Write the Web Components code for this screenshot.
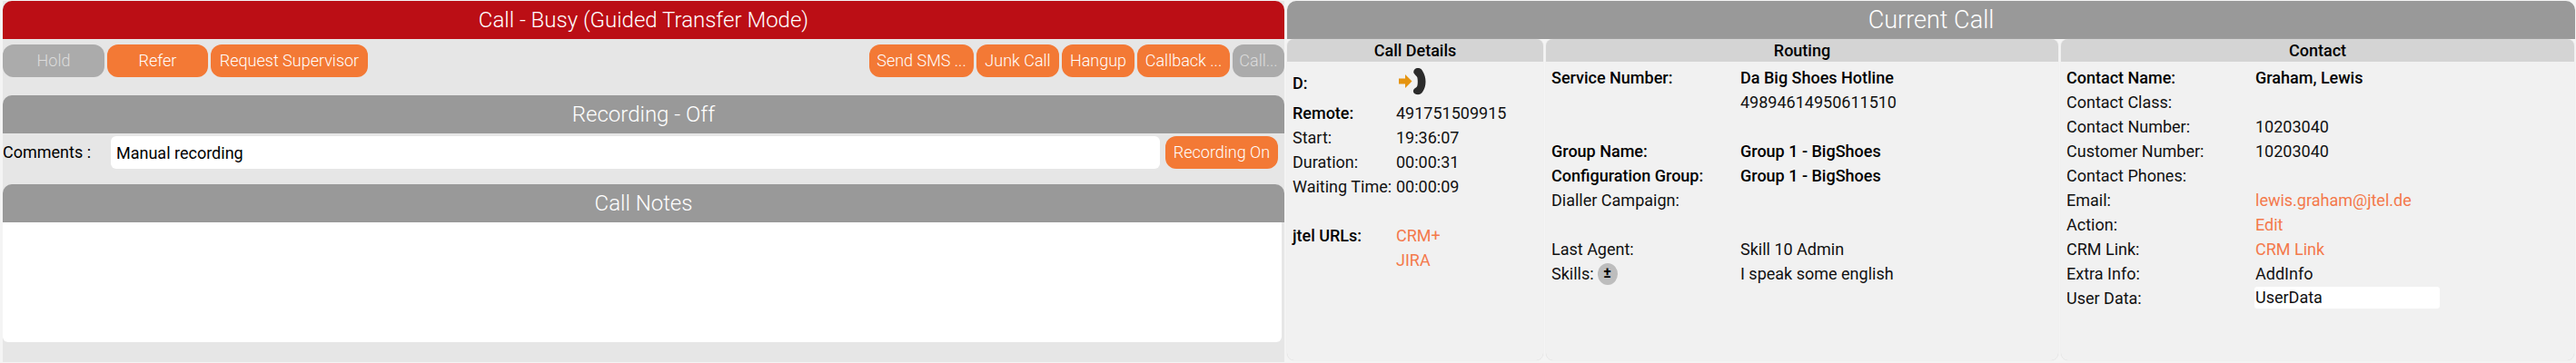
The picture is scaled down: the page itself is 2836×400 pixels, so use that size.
<!DOCTYPE html>
<html>
<head>
<meta charset="utf-8">
<title>Call</title>
<style>
  html, body { margin: 0; height: 100%; }
  body { background: #f4f4f4; font-family: Roboto, "Liberation Sans", sans-serif; font-size: 18px; overflow: hidden; }
  #page { display: grid; grid-template-columns: 1411px 1418px; column-gap: 3px; padding: 1px 1px 0 3px; height: 399px; box-sizing: border-box; }
</style>
</head>
<body>
<template id="tplHeader">
  <style>
    :host { display: block; height: 42px; line-height: 42px; background: #999999; color: #fff; text-align: center; font-size: 24px; font-weight: 300; border-radius: 10px 10px 0 0; }
    :host([kind="busy"]) { background: #bb0e15; }
    :host([kind="large"]) { font-size: 27px; }
  </style>
  <slot></slot>
</template>

<template id="tplButton">
  <style>
    :host { display: block; box-sizing: border-box; height: 36px; line-height: 36px; text-align: center; background: #f37935; color: #fff; font-size: 18px; font-weight: 300; border-radius: 12px; white-space: nowrap; overflow: hidden; }
    :host([disabled]) { background: #ababab; color: #dcdcdc; }
  </style>
  <slot></slot>
</template>

<template id="tplColumn">
  <style>
    :host { display: flex; flex-direction: column; min-width: 0; background: #f1f1f1; border-radius: 8px; box-shadow: 0 0 1px #c8c8c8; overflow: hidden; }
    .title { height: 25px; line-height: 25px; text-align: center; background: #d4d4d4; color: #000; font-size: 18px; font-weight: 500; flex: none; }
    .body { padding: 4px 0 0 6px; flex: 1; }
  </style>
  <div class="title"></div>
  <div class="body"><slot></slot></div>
</template>

<template id="tplRow">
  <style>
    :host { display: grid; grid-template-columns: var(--label-w, 114px) 1fr; height: 27px; line-height: 27px; color: #111; font-size: 18px; font-weight: 400; white-space: nowrap; }
    :host([strong]) { font-weight: 500; color: #000; }
    :host([tall]) { height: 39px; line-height: 39px; }
    .label { display: flex; align-items: center; gap: 4px; }
    ::slotted(a) { color: #f4794b; text-decoration: none; font-weight: 400; }
    ::slotted(.plain) { font-weight: 400; color: #111; }
    ::slotted(.boxed) { display: block; box-sizing: border-box; width: 204px; height: 24px; line-height: 24px; margin: 1px 0 0 -1px; padding-left: 1px; background: #fff; border-radius: 3px; }
  </style>
  <div class="label"><slot name="label"></slot></div>
  <div class="value"><slot></slot></div>
</template>

<template id="tplCommentBar">
  <style>
    :host { display: flex; align-items: center; height: 36px; margin-top: 3px; }
    .label { width: 119px; flex: none; font-size: 18px; font-weight: 400; color: #000; margin-top: -2px; }
    .input { flex: 1; height: 36px; line-height: 37px; padding-left: 6px; background: #fff; border-radius: 6px; font-size: 18px; font-weight: 400; color: #000; }
    .action { width: 124px; margin: 0 7px 0 6px; flex: none; }
  </style>
  <div class="label">Comments :</div>
  <div class="input"><slot></slot></div>
  <div class="action"><slot name="action"></slot></div>
</template>

<template id="tplCallPanel">
  <style>
    :host { display: flex; flex-direction: column; background: #e6e6e6; }
    .toolbar { display: flex; justify-content: space-between; padding-top: 6px; height: 62px; box-sizing: border-box; }
    .group { display: flex; gap: 3px; }
    .notes { height: 132px; margin-right: 3px; background: #fff; border-radius: 0 0 6px 6px; }
    .spacer { height: 17px; flex: none; }
  </style>
  <slot name="title"></slot>
  <div class="toolbar">
    <div class="group"><slot name="left"></slot></div>
    <div class="group"><slot name="right"></slot></div>
  </div>
  <slot name="recording"></slot>
  <slot name="comments"></slot>
  <div class="spacer"></div>
  <slot name="notes-title"></slot>
  <div class="notes"></div>
</template>

<template id="tplCurrentPanel">
  <style>
    :host { display: flex; flex-direction: column; }
    .cols { flex: 1; display: grid; grid-template-columns: 282px 564px 1fr; column-gap: 3px; padding: 0 1px 2px 0; min-height: 0; }
  </style>
  <slot name="title"></slot>
  <div class="cols"><slot></slot></div>
</template>

<div id="page">
  <call-panel>
    <panel-header slot="title" kind="busy">Call - Busy (Guided Transfer Mode)</panel-header>
    <call-button slot="left" disabled style="width:112px">Hold</call-button>
    <call-button slot="left" style="width:111px">Refer</call-button>
    <call-button slot="left" style="width:173px">Request Supervisor</call-button>
    <call-button slot="right" style="width:115px">Send SMS ...</call-button>
    <call-button slot="right" style="width:91px">Junk Call</call-button>
    <call-button slot="right" style="width:80px">Hangup</call-button>
    <call-button slot="right" style="width:102px">Callback ...</call-button>
    <call-button slot="right" disabled style="width:57px">Call...</call-button>
    <panel-header slot="recording">Recording - Off</panel-header>
    <comment-bar slot="comments">Manual recording<call-button slot="action">Recording On</call-button></comment-bar>
    <panel-header slot="notes-title">Call Notes</panel-header>
  </call-panel>

  <current-panel>
    <panel-header slot="title" kind="large">Current Call</panel-header>
    <detail-column heading="Call Details" style="--label-w:114px">
      <detail-row strong tall><span slot="label">D:</span>
        <svg width="30" height="30" viewBox="0 0 30 30" style="display:block;margin:3px 0 0 3px">
          <path d="M0 11.500h7V7l7.500 7.500L7 22v-4.500H0z" fill="#e59410"/>
          <path d="M20 0C23-.5 25 1 26 3c2.500 4 3.500 8 3.500 12S28.500 23 26 26.500C25 28.500 22 29.500 19.500 29 16.500 28.500 15 26 16.500 23.500c1-1.500 3-2 3.700-3.500.8-2 .8-8 0-10C19.500 8.500 17.500 7.500 16.500 5.500 15.500 3 17.500.5 20 0z" fill="#2b2b2b"/>
        </svg>
      </detail-row>
      <detail-row strong><span slot="label">Remote:</span><span class="plain">491751509915</span></detail-row>
      <detail-row><span slot="label">Start:</span>19:36:07</detail-row>
      <detail-row><span slot="label">Duration:</span>00:00:31</detail-row>
      <detail-row><span slot="label">Waiting Time:</span>00:00:09</detail-row>
      <detail-row></detail-row>
      <detail-row strong><span slot="label">jtel URLs:</span><a href="#">CRM+</a></detail-row>
      <detail-row><a href="#">JIRA</a></detail-row>
    </detail-column>

    <detail-column heading="Routing" style="--label-w:208px">
      <detail-row strong><span slot="label">Service Number:</span>Da Big Shoes Hotline</detail-row>
      <detail-row>49894614950611510</detail-row>
      <detail-row></detail-row>
      <detail-row strong><span slot="label">Group Name:</span>Group 1 - BigShoes</detail-row>
      <detail-row strong><span slot="label">Configuration Group:</span>Group 1 - BigShoes</detail-row>
      <detail-row><span slot="label">Dialler Campaign:</span></detail-row>
      <detail-row></detail-row>
      <detail-row><span slot="label">Last Agent:</span>Skill 10 Admin</detail-row>
      <detail-row><span slot="label">Skills:</span><round-toggle slot="label">±</round-toggle>I speak some english</detail-row>
    </detail-column>

    <detail-column heading="Contact" style="--label-w:208px">
      <detail-row strong><span slot="label">Contact Name:</span>Graham, Lewis</detail-row>
      <detail-row><span slot="label">Contact Class:</span></detail-row>
      <detail-row><span slot="label">Contact Number:</span>10203040</detail-row>
      <detail-row><span slot="label">Customer Number:</span>10203040</detail-row>
      <detail-row><span slot="label">Contact Phones:</span></detail-row>
      <detail-row><span slot="label">Email:</span><a href="#">lewis.graham@jtel.de</a></detail-row>
      <detail-row><span slot="label">Action:</span><a href="#">Edit</a></detail-row>
      <detail-row><span slot="label">CRM Link:</span><a href="#">CRM Link</a></detail-row>
      <detail-row><span slot="label">Extra Info:</span>AddInfo</detail-row>
      <detail-row><span slot="label">User Data:</span><span class="boxed">UserData</span></detail-row>
    </detail-column>
  </current-panel>
</div>

<script>
function fromTemplate(id) {
  return class extends HTMLElement {
    constructor() {
      super();
      this.attachShadow({ mode: 'open' });
      this.shadowRoot.appendChild(document.getElementById(id).content.cloneNode(true));
    }
  };
}

class DetailColumn extends fromTemplate('tplColumn') {
  connectedCallback() {
    this.shadowRoot.querySelector('.title').textContent = this.getAttribute('heading');
  }
}

class RoundToggle extends HTMLElement {
  constructor() {
    super();
    this.attachShadow({ mode: 'open' });
    this.shadowRoot.innerHTML = `
      <style>
        :host { display: inline-block; width: 22px; height: 24px; line-height: 21px; border-radius: 50%; background: #bdbdbd; color: #000; text-align: center; font-size: 16px; font-weight: 700; }
      </style>
      <slot></slot>`;
  }
}

customElements.define('panel-header', fromTemplate('tplHeader'));
customElements.define('call-button', fromTemplate('tplButton'));
customElements.define('detail-column', DetailColumn);
customElements.define('detail-row', fromTemplate('tplRow'));
customElements.define('comment-bar', fromTemplate('tplCommentBar'));
customElements.define('call-panel', fromTemplate('tplCallPanel'));
customElements.define('current-panel', fromTemplate('tplCurrentPanel'));
customElements.define('round-toggle', RoundToggle);
</script>
</body>
</html>
